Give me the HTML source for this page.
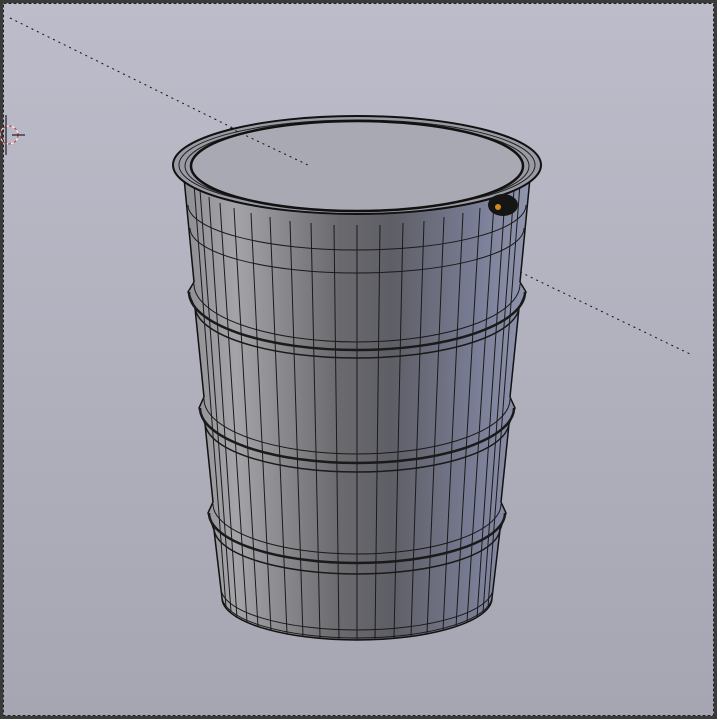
<!DOCTYPE html>
<html><head><style>
html,body{margin:0;padding:0;width:717px;height:719px;overflow:hidden;background:#555}
svg{display:block}
</style></head><body>
<svg width="717" height="719" viewBox="0 0 717 719" xmlns="http://www.w3.org/2000/svg">
<defs>
<linearGradient id="bg" x1="0" y1="0" x2="0" y2="1">
<stop offset="0" stop-color="#bcbcca"/><stop offset="1" stop-color="#a6a6b2"/></linearGradient>
<linearGradient id="body" x1="0" y1="0" x2="1" y2="0">
<stop offset="0" stop-color="#8e8e94"/><stop offset="0.15" stop-color="#a4a4a8"/>
<stop offset="0.45" stop-color="#6a6a6e"/><stop offset="0.6" stop-color="#5e5e66"/>
<stop offset="0.85" stop-color="#7a7e96"/><stop offset="1" stop-color="#9196ae"/></linearGradient>
</defs>
<rect x="0" y="0" width="717" height="719" fill="#3a3a3a"/>
<rect x="3" y="3" width="711" height="713" fill="url(#bg)"/>
<rect x="3.5" y="3.5" width="710" height="712" fill="none" stroke="#222" stroke-dasharray="3 2"/>
<line x1="10" y1="18" x2="310" y2="166" stroke="#111" stroke-dasharray="2 4"/>
<line x1="520" y1="272" x2="692" y2="355" stroke="#111" stroke-dasharray="2 4"/>
<circle cx="9" cy="135" r="9" fill="none" stroke="#c33" stroke-dasharray="3 3"/>
<circle cx="9" cy="135" r="9" fill="none" stroke="#fff" stroke-dasharray="3 3" stroke-dashoffset="3"/>
<line x1="6" y1="115" x2="6" y2="155" stroke="#000"/>
<line x1="12" y1="135" x2="25" y2="135" stroke="#000"/>
<path d="M184 178 L194 282 L188 292 L195 308 L204 397 L199 408 L205 424 L213 502 L208 513 L214 530 L222 598 A135 42 0 0 0 492 598 L500 530 L506 513 L501 502 L509 424 L515 408 L510 397 L519 308 L526 292 L520 282 L530 178 Z" fill="url(#body)" stroke="#111" stroke-width="1.5"/>
<g stroke="#1a1a1a" stroke-width="1" fill="none">
<path d="M194 184L226 607M200 190L231 612M209 197L237 618M220 203L247 622M234 208L258 627M251 213L271 631M270 217L287 634M290 221L303 637M311 223L320 638M334 225L339 640M357 225L357 640M380 225L375 640M403 223L394 638M424 221L411 637M444 217L427 634M463 213L443 631M480 208L456 627M494 203L467 622M505 197L477 618M514 190L483 612M520 184L488 607"/>
<path d="M188 205 A169 45 0 0 0 526 205"/>
<path d="M190 228 A167 45 0 0 0 524 228"/>
<path d="M194 284 A163 58 0 0 0 520 284"/>
<path d="M189 292 A168 58 0 0 0 525 292" stroke-width="2.5"/>
<path d="M195 306 A162 52 0 0 0 519 306" stroke-width="1.5"/>
<path d="M204 399 A153 55 0 0 0 510 399"/>
<path d="M200 408 A157 55 0 0 0 514 408" stroke-width="2.5"/>
<path d="M205 422 A152 50 0 0 0 509 422" stroke-width="1.5"/>
<path d="M213 504 A144 50 0 0 0 501 504"/>
<path d="M209 513 A148 50 0 0 0 505 513" stroke-width="2.5"/>
<path d="M214 528 A143 46 0 0 0 500 528" stroke-width="1.5"/>
<path d="M221 588 A136 42 0 0 0 493 588"/>
<path d="M222 596 A135 42 0 0 0 492 596"/>
</g>
<ellipse cx="357" cy="165" rx="184" ry="49" fill="#9a9aa4" stroke="#111" stroke-width="2"/>
<ellipse cx="357" cy="165" rx="178" ry="45" fill="none" stroke="#222" stroke-width="1"/>
<ellipse cx="357" cy="166" rx="172" ry="44" fill="none" stroke="#222" stroke-width="1"/>
<ellipse cx="357" cy="166" rx="166" ry="45" fill="#a8a9b3" stroke="#111" stroke-width="2.5"/>
<line x1="230" y1="128" x2="310" y2="166" stroke="#111" stroke-dasharray="2 4"/>
<ellipse cx="503" cy="205" rx="15" ry="11" fill="#151515"/>
<circle cx="498" cy="207" r="3" fill="#d08a20"/>
</svg>
</body></html>
